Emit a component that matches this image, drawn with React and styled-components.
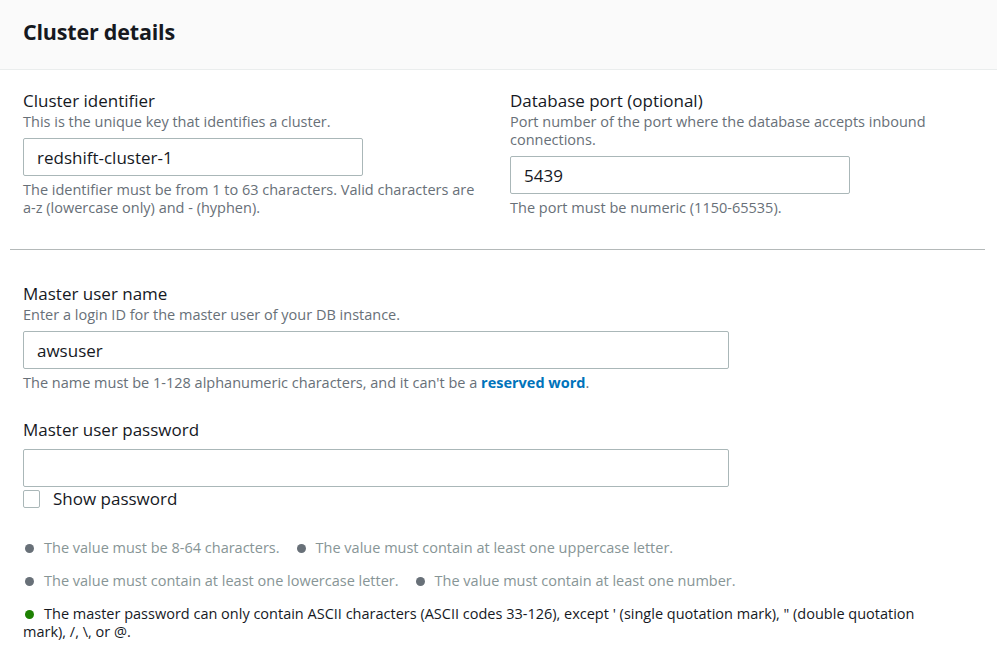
import React from "react";
import styled, { createGlobalStyle } from "styled-components";

const Global = createGlobalStyle`
  html, body { margin: 0; padding: 0; background: #ffffff; }
  body { font-family: "Open Sans", "Noto Sans", Arial, sans-serif; color: #16191f; }
  * { box-sizing: border-box; }
`;

const Page = styled.div`
  width: 997px;
  min-height: 665px;
  background: #fff;
`;

const Header = styled.div`
  height: 70px;
  background: #fafafa;
  border-bottom: 1px solid #eaeded;
  padding: 0 23px;
  display: flex;
  align-items: center;
`;

const Title = styled.h2`
  margin: 0 0 6px 0;
  font-size: 21.5px;
  font-weight: 700;
  color: #16191f;
  letter-spacing: -0.2px;
`;

const Body = styled.div`
  padding: 20px 12px 0 10px;
`;

const Grid = styled.div`
  display: grid;
  grid-template-columns: 464px 464px;
  column-gap: 23px;
  padding-left: 13px;
`;

const Field = styled.div`
  display: flex;
  flex-direction: column;
  margin-top: ${(p) => p.$mt || 0}px;
  padding-left: ${(p) => p.$pl || 0}px;
`;

const Label = styled.div`
  font-size: 17px;
  line-height: 22px;
  color: #16191f;
`;

const Desc = styled.div`
  margin-top: 1px;
  font-size: 14.5px;
  line-height: 18px;
  color: #687078;
`;

const Input = styled.div`
  margin-top: ${(p) => p.$mt ?? 7}px;
  width: ${(p) => p.$w}px;
  height: 38px;
  border: 1px solid #aab7b8;
  border-radius: 2px;
  padding: 0 13px;
  display: flex;
  align-items: center;
  font-size: 17px;
  color: #16191f;
`;

const Constraint = styled.div`
  margin-top: 5px;
  font-size: 14.5px;
  line-height: 18px;
  color: #687078;
`;

const Link = styled.a`
  color: #0073bb;
  font-weight: 700;
  text-decoration: none;
`;

const Divider = styled.hr`
  margin: 32px 0 0 0;
  border: none;
  border-top: 1px solid #b4b9b9;
  height: 0;
`;

const CheckRow = styled.label`
  display: flex;
  align-items: center;
  gap: 13px;
  margin-top: 1px;
  font-size: 17px;
  line-height: 22px;
  color: #16191f;
`;

const Box = styled.span`
  width: 17px;
  height: 18px;
  border: 1px solid #aab7b8;
  border-radius: 2px;
  background: #fff;
`;

const Rules = styled.div`
  margin-top: 29px;
  display: flex;
  flex-direction: column;
  gap: 15px;
  width: 928px;
`;

const RuleRow = styled.div`
  display: flex;
  flex-wrap: wrap;
  column-gap: 15px;
`;

const Rule = styled.div`
  font-size: 14.5px;
  line-height: 18px;
  color: ${(p) => (p.$ok ? "#16191f" : "#879596")};
`;

const Dot = styled.span`
  display: inline-block;
  width: 9px;
  height: 9px;
  border-radius: 50%;
  background: ${(p) => (p.$ok ? "#1d8102" : "#687078")};
  margin: 0 10px 0 2px;
  vertical-align: 0px;
`;

export default function App() {
  return (
    <Page>
      <Global />
      <Header>
        <Title>Cluster details</Title>
      </Header>
      <Body>
        <Grid>
          <Field>
            <Label>Cluster identifier</Label>
            <Desc>This is the unique key that identifies a cluster.</Desc>
            <Input $w={340}>redshift-cluster-1</Input>
            <Constraint>
              The identifier must be from 1 to 63 characters. Valid characters are a-z (lowercase only) and - (hyphen).
            </Constraint>
          </Field>
          <Field>
            <Label>Database port (optional)</Label>
            <Desc>Port number of the port where the database accepts inbound connections.</Desc>
            <Input $w={340}>5439</Input>
            <Constraint>The port must be numeric (1150-65535).</Constraint>
          </Field>
        </Grid>
        <Divider />
        <Field $mt={33} $pl={13}>
          <Label>Master user name</Label>
          <Desc>Enter a login ID for the master user of your DB instance.</Desc>
          <Input $w={706}>awsuser</Input>
          <Constraint>
            The name must be 1-128 alphanumeric characters, and it can't be a <Link href="#">reserved word</Link>.
          </Constraint>
        </Field>
        <Field $mt={27} $pl={13}>
          <Label>Master user password</Label>
          <Input $w={706} $mt={8} />
          <CheckRow>
            <Box />
            Show password
          </CheckRow>
          <Rules>
            <RuleRow>
              <Rule><Dot />The value must be 8-64 characters.</Rule>
              <Rule><Dot />The value must contain at least one uppercase letter.</Rule>
            </RuleRow>
            <RuleRow>
              <Rule><Dot />The value must contain at least one lowercase letter.</Rule>
              <Rule><Dot />The value must contain at least one number.</Rule>
            </RuleRow>
            <RuleRow>
              <Rule $ok>
                <Dot $ok />The master password can only contain ASCII characters (ASCII codes 33-126), except ' (single quotation mark), " (double quotation mark), /, \, or @.
              </Rule>
            </RuleRow>
          </Rules>
        </Field>
      </Body>
    </Page>
  );
}
